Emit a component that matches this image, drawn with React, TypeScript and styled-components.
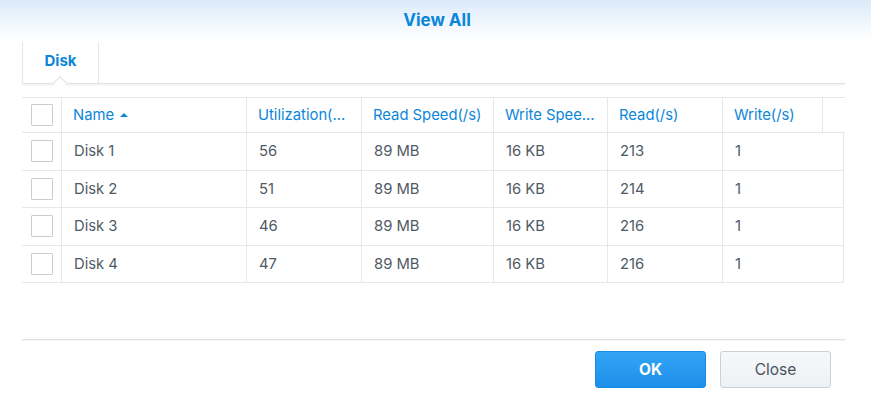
import React from 'react'
import styled, { createGlobalStyle } from 'styled-components'

const GlobalStyle = createGlobalStyle`
  html, body {
    margin: 0;
    padding: 0;
    background: #ffffff;
  }
  body {
    font-family: Inter, Roboto, "Liberation Sans", sans-serif;
    color: #414b55;
  }
`

interface Column {
  key: string
  title: string
  width: number
}

const columns: Column[] = [
  { key: 'name', title: 'Name', width: 185 },
  { key: 'util', title: 'Utilization(...', width: 115 },
  { key: 'readSpeed', title: 'Read Speed(/s)', width: 132 },
  { key: 'writeSpeed', title: 'Write Spee...', width: 114 },
  { key: 'read', title: 'Read(/s)', width: 115 },
  { key: 'write', title: 'Write(/s)', width: 100 },
]

const rows = [
  { name: 'Disk 1', util: '56', readSpeed: '89 MB', writeSpeed: '16 KB', read: '213', write: '1' },
  { name: 'Disk 2', util: '51', readSpeed: '89 MB', writeSpeed: '16 KB', read: '214', write: '1' },
  { name: 'Disk 3', util: '46', readSpeed: '89 MB', writeSpeed: '16 KB', read: '216', write: '1' },
  { name: 'Disk 4', util: '47', readSpeed: '89 MB', writeSpeed: '16 KB', read: '216', write: '1' },
]

const App: React.FC = () => {
  return (
    <StyledDialog>
      <GlobalStyle />
      <StyledTitleBar>View All</StyledTitleBar>
      <StyledBody>
        <StyledTabStrip>
          <StyledTab>
            Disk
            <StyledTabCaret />
          </StyledTab>
        </StyledTabStrip>

        <StyledGrid>
          <StyledHeaderRow>
            <StyledCheckCell>
              <StyledCheckbox />
            </StyledCheckCell>
            {columns.map((col) => (
              <StyledHeaderCell key={col.key} width={col.width}>
                {col.title}
                {col.key === 'name' && <StyledSortArrow />}
              </StyledHeaderCell>
            ))}
            <StyledHeaderFiller />
          </StyledHeaderRow>

          {rows.map((row) => (
            <StyledRow key={row.name}>
              <StyledCheckCell>
                <StyledCheckbox />
              </StyledCheckCell>
              {columns.map((col, i) => (
                <StyledCell key={col.key} width={i === columns.length - 1 ? 122 : col.width}>
                  {row[col.key as keyof typeof row]}
                </StyledCell>
              ))}
            </StyledRow>
          ))}
        </StyledGrid>
      </StyledBody>

      <StyledFooter>
        <StyledButton primary>OK</StyledButton>
        <StyledButton>Close</StyledButton>
      </StyledFooter>
    </StyledDialog>
  )
}

const StyledDialog = styled.div`
  width: 871px;
  height: 399px;
  display: flex;
  flex-direction: column;
  background: #ffffff;
`

const StyledTitleBar = styled.div`
  height: 40px;
  display: flex;
  align-items: center;
  justify-content: center;
  padding-left: 3px;
  background: linear-gradient(to bottom, #dbeaf9 0%, #ecf4fc 45%, #ffffff 100%);
  color: #0b86d9;
  font-size: 17px;
  font-weight: 700;
`

const StyledBody = styled.div`
  flex: 1;
  padding: 2px 26px 0 22px;
`

const StyledTabStrip = styled.div`
  height: 41px;
  display: flex;
  border-bottom: 1px solid #dfe3e7;
  box-shadow: 0 2px 2px -1px rgba(0, 0, 0, 0.08);
`

const StyledTab = styled.div`
  position: relative;
  width: 77px;
  display: flex;
  align-items: center;
  justify-content: center;
  border-left: 1px solid #e3e7eb;
  border-right: 1px solid #e3e7eb;
  color: #0b86d9;
  font-size: 15px;
  font-weight: 700;
  padding-bottom: 4px;
  box-sizing: border-box;
`

const StyledTabCaret = styled.span`
  position: absolute;
  left: 32px;
  bottom: -5px;
  width: 9px;
  height: 9px;
  background: #ffffff;
  border-left: 1px solid #dfe3e7;
  border-top: 1px solid #dfe3e7;
  transform: rotate(45deg);
`

const StyledGrid = styled.div`
  margin-top: 13px;
  display: flex;
  flex-direction: column;
`

const StyledHeaderRow = styled.div`
  display: flex;
  height: 36px;
  border-top: 1px solid #e3e7eb;
  border-bottom: 1px solid #e3e7eb;
  box-sizing: border-box;
`

const StyledRow = styled.div`
  display: flex;
  height: 37.5px;
  width: 822px;
  border-bottom: 1px solid #e6e9ec;
  border-right: 1px solid #e6e9ec;
  box-sizing: border-box;
`

const StyledCheckCell = styled.div`
  width: 40px;
  flex: none;
  display: flex;
  align-items: center;
  padding-left: 9px;
  box-sizing: border-box;
  border-right: 1px solid #e6e9ec;
`

const StyledCheckbox = styled.span`
  width: 22px;
  height: 22px;
  border: 1px solid #c9ced3;
  border-radius: 1px;
  box-sizing: border-box;
  background: #ffffff;
`

const StyledHeaderCell = styled.div<{ width: number }>`
  width: ${(props) => props.width}px;
  flex: none;
  display: flex;
  align-items: center;
  padding-left: 11px;
  box-sizing: border-box;
  border-right: 1px solid #e3e7eb;
  color: #0b86d9;
  font-size: 14.8px;
  white-space: nowrap;
  overflow: hidden;
`

const StyledSortArrow = styled.span`
  margin-left: 6px;
  width: 0;
  height: 0;
  border-left: 4px solid transparent;
  border-right: 4px solid transparent;
  border-bottom: 4px solid #0b86d9;
`

const StyledHeaderFiller = styled.div`
  width: 22px;
  flex: none;
`

const StyledCell = styled.div<{ width: number }>`
  width: ${(props) => props.width}px;
  flex: none;
  display: flex;
  align-items: center;
  padding-left: 12px;
  box-sizing: border-box;
  border-right: 1px solid #e6e9ec;
  font-size: 14.8px;
  color: #505a64;
  &:last-child {
    border-right: 0;
  }
`

const StyledFooter = styled.div`
  margin: 0 26px 11px 22px;
  height: 48px;
  border-top: 1px solid #dfe1e3;
  box-shadow: inset 0 1px 1px rgba(0, 0, 0, 0.04);
  display: flex;
  align-items: flex-end;
  justify-content: flex-end;
  gap: 14px;
  padding-right: 14px;
`

const StyledButton = styled.button<{ primary?: boolean }>`
  width: 111px;
  height: 37px;
  border-radius: 3px;
  font-family: Inter, Roboto, "Liberation Sans", sans-serif;
  font-size: 15.5px;
  cursor: pointer;
  border: 1px solid ${(props) => (props.primary ? '#1a8be3' : '#c9d0d6')};
  background: ${(props) =>
    props.primary ? 'linear-gradient(to bottom, #33a5f7, #1d8fe9)' : 'linear-gradient(to bottom, #f6f8fa, #edf1f4)'};
  color: ${(props) => (props.primary ? '#ffffff' : '#4a535c')};
  font-weight: ${(props) => (props.primary ? 700 : 400)};
`

export default App
